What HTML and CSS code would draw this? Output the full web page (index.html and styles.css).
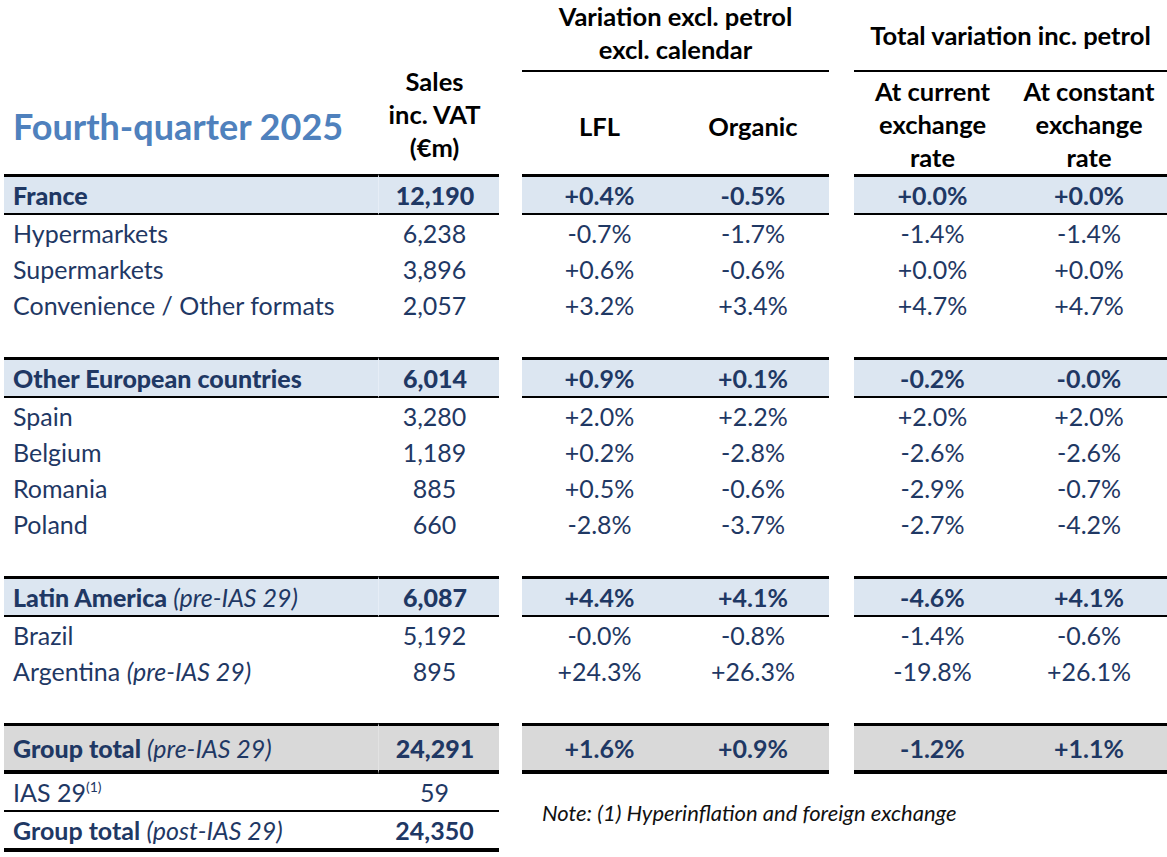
FILE: index.html
```html
<!DOCTYPE html>
<html lang="en">
<head>
<meta charset="utf-8">
<title>Fourth-quarter 2025 sales</title>
<link rel="stylesheet" href="styles.css">
</head>
<body>
<table class="sales">
  <colgroup>
    <col class="c-label"><col class="c-sales"><col class="c-gap1">
    <col class="c-lfl"><col class="c-org"><col class="c-gap2">
    <col class="c-cur"><col class="c-const">
  </colgroup>
  <thead>
    <tr class="h1">
      <th rowspan="2" class="title">Fourth-quarter 2025</th>
      <th rowspan="2" class="salesh">Sales<br>inc. VAT<br>(€m)</th>
      <th class="gap"></th>
      <th colspan="2" class="group-h top">Variation excl. petrol<br>excl. calendar</th>
      <th class="gap"></th>
      <th colspan="2" class="group-h">Total variation inc. petrol</th>
    </tr>
    <tr class="h2">
      <th class="gap"></th>
      <th class="sub mid">LFL</th>
      <th class="sub mid">Organic</th>
      <th class="gap"></th>
      <th class="sub">At current<br>exchange<br>rate</th>
      <th class="sub">At constant<br>exchange<br>rate</th>
    </tr>
  </thead>
  <tbody>
    <tr class="sec blue">
      <td class="lbl"><b>France</b></td><td class="num"><b>12,190</b></td><td class="gap"></td>
      <td>+0.4%</td><td>-0.5%</td><td class="gap"></td><td>+0.0%</td><td>+0.0%</td>
    </tr>
    <tr class="row">
      <td class="lbl">Hypermarkets</td><td class="num">6,238</td><td class="gap"></td>
      <td>-0.7%</td><td>-1.7%</td><td class="gap"></td><td>-1.4%</td><td>-1.4%</td>
    </tr>
    <tr class="row">
      <td class="lbl">Supermarkets</td><td class="num">3,896</td><td class="gap"></td>
      <td>+0.6%</td><td>-0.6%</td><td class="gap"></td><td>+0.0%</td><td>+0.0%</td>
    </tr>
    <tr class="row">
      <td class="lbl">Convenience / Other formats</td><td class="num">2,057</td><td class="gap"></td>
      <td>+3.2%</td><td>+3.4%</td><td class="gap"></td><td>+4.7%</td><td>+4.7%</td>
    </tr>
    <tr class="spacer"><td colspan="8"></td></tr>
    <tr class="sec blue">
      <td class="lbl"><b>Other European countries</b></td><td class="num"><b>6,014</b></td><td class="gap"></td>
      <td>+0.9%</td><td>+0.1%</td><td class="gap"></td><td>-0.2%</td><td>-0.0%</td>
    </tr>
    <tr class="row">
      <td class="lbl">Spain</td><td class="num">3,280</td><td class="gap"></td>
      <td>+2.0%</td><td>+2.2%</td><td class="gap"></td><td>+2.0%</td><td>+2.0%</td>
    </tr>
    <tr class="row">
      <td class="lbl">Belgium</td><td class="num">1,189</td><td class="gap"></td>
      <td>+0.2%</td><td>-2.8%</td><td class="gap"></td><td>-2.6%</td><td>-2.6%</td>
    </tr>
    <tr class="row">
      <td class="lbl">Romania</td><td class="num">885</td><td class="gap"></td>
      <td>+0.5%</td><td>-0.6%</td><td class="gap"></td><td>-2.9%</td><td>-0.7%</td>
    </tr>
    <tr class="row">
      <td class="lbl">Poland</td><td class="num">660</td><td class="gap"></td>
      <td>-2.8%</td><td>-3.7%</td><td class="gap"></td><td>-2.7%</td><td>-4.2%</td>
    </tr>
    <tr class="spacer"><td colspan="8"></td></tr>
    <tr class="sec blue">
      <td class="lbl"><b>Latin America</b> <i>(pre-IAS 29)</i></td><td class="num"><b>6,087</b></td><td class="gap"></td>
      <td>+4.4%</td><td>+4.1%</td><td class="gap"></td><td>-4.6%</td><td>+4.1%</td>
    </tr>
    <tr class="row">
      <td class="lbl">Brazil</td><td class="num">5,192</td><td class="gap"></td>
      <td>-0.0%</td><td>-0.8%</td><td class="gap"></td><td>-1.4%</td><td>-0.6%</td>
    </tr>
    <tr class="row">
      <td class="lbl">Argentina <i>(pre-IAS 29)</i></td><td class="num">895</td><td class="gap"></td>
      <td>+24.3%</td><td>+26.3%</td><td class="gap"></td><td>-19.8%</td><td>+26.1%</td>
    </tr>
    <tr class="spacer"><td colspan="8"></td></tr>
    <tr class="sec grey total">
      <td class="lbl"><b>Group total</b> <i>(pre-IAS 29)</i></td><td class="num"><b>24,291</b></td><td class="gap"></td>
      <td>+1.6%</td><td>+0.9%</td><td class="gap"></td><td>-1.2%</td><td>+1.1%</td>
    </tr>
    <tr class="row ias">
      <td class="lbl">IAS 29<sup>(1)</sup></td><td class="num">59</td><td class="gap"></td>
      <td colspan="5" rowspan="2" class="note"><i>Note: (1) Hyperinflation and foreign exchange</i></td>
    </tr>
    <tr class="row post">
      <td class="lbl"><b>Group total</b> <i>(post-IAS 29)</i></td><td class="num"><b>24,350</b></td><td class="gap"></td>
    </tr>
  </tbody>
</table>
</body>
</html>
```

FILE: styles.css
```css
html, body {
  margin: 0;
  padding: 0;
  background: #ffffff;
}

body {
  padding-left: 4px;
  font-family: Lato, "Open Sans", "Liberation Sans", sans-serif;
  color: #1f3864;
}

.sales {
  border-collapse: separate;
  border-spacing: 0;
  table-layout: fixed;
  width: 1163px;
  font-size: 25px;
}

.c-label { width: 374px; }
.c-sales { width: 121px; }
.c-gap1 { width: 23px; }
.c-lfl { width: 155px; }
.c-org { width: 152px; }
.c-gap2 { width: 25px; }
.c-cur { width: 157px; }
.c-const { width: 156px; }

.sales th, .sales td {
  padding: 0;
  text-align: center;
  vertical-align: middle;
  white-space: nowrap;
}

/* header */
.sales th {
  color: #000000;
  font-weight: 700;
  font-size: 25.5px;
  line-height: 33px;
}

.h1 th { height: 70px; }
.h2 th { height: 102px; }

.sales th.title {
  text-align: left;
  vertical-align: bottom;
  padding: 0 0 28px 9px;
  color: #4f81bd;
  font-size: 36px;
  line-height: 40px;
}

.sales th.salesh {
  vertical-align: bottom;
  padding-bottom: 10px;
  padding-right: 8px;
}

.sales th.group-h {
  border-bottom: 2px solid #000000;
  vertical-align: middle;
}

.sales th.group-h.top {
  vertical-align: top;
}

.sales th.sub {
  vertical-align: bottom;
}

.sales th.sub.mid {
  vertical-align: middle;
  height: 96px;
  padding-top: 6px;
}

/* body */
.row td {
  height: 36px;
  line-height: 36px;
}

.spacer td { height: 34px; }

.sales td.lbl {
  text-align: left;
  padding-left: 9px;
}

.sales td.num {
  padding-right: 8px;
}

.sec td {
  height: 36px;
  line-height: 36px;
  font-weight: 700;
  border-top: 3px solid #000000;
  border-bottom: 2px solid #000000;
}

.sec td i { font-weight: 400; }

.sec td.gap {
  border: none;
  background: transparent;
}

.blue td { background: #dce6f1; }
.grey td { background: #d9d9d9; }

.sec td.num {
  border-left: 1px solid #e6edf6;
}

.grey td.num {
  border-left: 1px solid #e2e2e2;
}

.total td {
  height: 44px;
  border-bottom-width: 4px;
}

.ias td.lbl, .ias td.num {
  border-bottom: 2px solid #000000;
}

.post td.lbl, .post td.num {
  border-bottom: 4px solid #000000;
}

.post td { height: 36px; }

sup {
  font-size: 14px;
  line-height: 0;
  vertical-align: 10px;
}

.sales td.note {
  text-align: left;
  padding-left: 20px;
  color: #111111;
  font-size: 22px;
  vertical-align: middle;
}
```
